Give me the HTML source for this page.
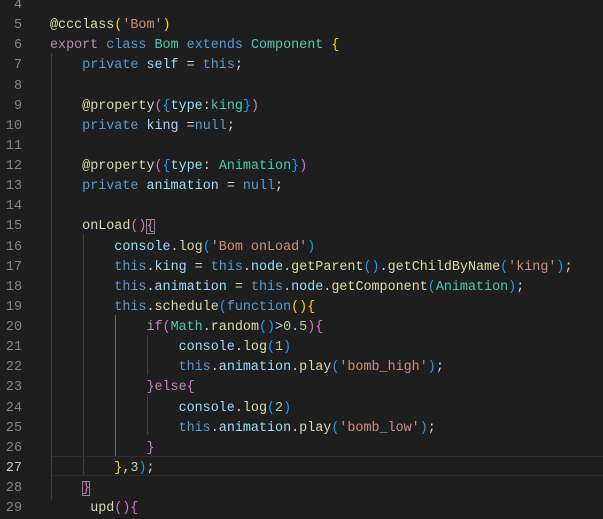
<!DOCTYPE html>
<html><head><meta charset="utf-8"><style>
html,body{margin:0;padding:0;background:#1e1e1e;width:603px;height:500px;overflow:hidden}
.ed{position:absolute;left:0;top:-4px;width:603px;font-family:"Liberation Mono",monospace;font-size:13.4px;line-height:20.14px;color:#d4d4d4}
.l{position:relative;height:20.14px;white-space:pre}
.n{position:absolute;left:0;width:22px;text-align:right;color:#858585}
.c{position:absolute;left:50px}
.k{color:#569cd6}.p{color:#c586c0}.t{color:#4ec9b0}.f{color:#dcdcaa}.s{color:#ce9178}.v{color:#9cdcfe}.num{color:#b5cea8}
.g{color:#ffd700}.o{color:#da70d6}.b{color:#179fff}
.box{outline:1px solid #888;outline-offset:-1px}
.gd{position:absolute;width:1px;background:#404040}
.cur{position:absolute;left:52px;right:0;height:18px;border-top:1px solid #2d2d2d;border-bottom:1px solid #2d2d2d}
</style></head><body>
<div class="gd" style="left:51px;top:53px;height:447px"></div>
<div class="gd" style="left:83px;top:234px;height:242px"></div>
<div class="gd" style="left:115px;top:315px;height:141px;background:#6a6a6a"></div>
<div class="gd" style="left:147px;top:335px;height:40px"></div>
<div class="gd" style="left:147px;top:395px;height:40px"></div>
<div class="cur" style="top:456px"></div>
<div class="ed">
<div class="l"><span class="n">4</span></div>
<div class="l"><span class="n">5</span><span class="c"><span class="f">@ccclass</span><span class="g">(</span><span class="s">'Bom'</span><span class="g">)</span></span></div>
<div class="l"><span class="n">6</span><span class="c"><span class="p">export</span> <span class="k">class</span> <span class="t">Bom</span> <span class="k">extends</span> <span class="t">Component</span> <span class="g">{</span></span></div>
<div class="l"><span class="n">7</span><span class="c">    <span class="k">private</span> <span class="v">self</span> = <span class="k">this</span>;</span></div>
<div class="l"><span class="n">8</span></div>
<div class="l"><span class="n">9</span><span class="c">    <span class="f">@property</span><span class="o">(</span><span class="b">{</span><span class="v">type</span>:<span class="t">king</span><span class="b">}</span><span class="o">)</span></span></div>
<div class="l"><span class="n">10</span><span class="c">    <span class="k">private</span> <span class="v">king</span> =<span class="k">null</span>;</span></div>
<div class="l"><span class="n">11</span></div>
<div class="l"><span class="n">12</span><span class="c">    <span class="f">@property</span><span class="o">(</span><span class="b">{</span><span class="v">type</span>: <span class="t">Animation</span><span class="b">}</span><span class="o">)</span></span></div>
<div class="l"><span class="n">13</span><span class="c">    <span class="k">private</span> <span class="v">animation</span> = <span class="k">null</span>;</span></div>
<div class="l"><span class="n">14</span></div>
<div class="l"><span class="n">15</span><span class="c">    <span class="f">onLoad</span><span class="o">()</span><span class="o box">{</span></span></div>
<div class="l"><span class="n">16</span><span class="c">        <span class="v">console</span>.<span class="f">log</span><span class="b">(</span><span class="s">'Bom onLoad'</span><span class="b">)</span></span></div>
<div class="l"><span class="n">17</span><span class="c">        <span class="k">this</span>.<span class="v">king</span> = <span class="k">this</span>.<span class="v">node</span>.<span class="f">getParent</span><span class="b">()</span>.<span class="f">getChildByName</span><span class="b">(</span><span class="s">'king'</span><span class="b">)</span>;</span></div>
<div class="l"><span class="n">18</span><span class="c">        <span class="k">this</span>.<span class="v">animation</span> = <span class="k">this</span>.<span class="v">node</span>.<span class="f">getComponent</span><span class="b">(</span><span class="t">Animation</span><span class="b">)</span>;</span></div>
<div class="l"><span class="n">19</span><span class="c">        <span class="k">this</span>.<span class="f">schedule</span><span class="b">(</span><span class="k">function</span><span class="g">(){</span></span></div>
<div class="l"><span class="n">20</span><span class="c">            <span class="p">if</span><span class="o">(</span><span class="t">Math</span>.<span class="f">random</span><span class="b">()</span>&gt;<span class="num">0.5</span><span class="o">){</span></span></div>
<div class="l"><span class="n">21</span><span class="c">                <span class="v">console</span>.<span class="f">log</span><span class="b">(</span><span class="num">1</span><span class="b">)</span></span></div>
<div class="l"><span class="n">22</span><span class="c">                <span class="k">this</span>.<span class="v">animation</span>.<span class="f">play</span><span class="b">(</span><span class="s">'bomb_high'</span><span class="b">)</span>;</span></div>
<div class="l"><span class="n">23</span><span class="c">            <span class="o">}</span><span class="p">else</span><span class="o">{</span></span></div>
<div class="l"><span class="n">24</span><span class="c">                <span class="v">console</span>.<span class="f">log</span><span class="b">(</span><span class="num">2</span><span class="b">)</span></span></div>
<div class="l"><span class="n">25</span><span class="c">                <span class="k">this</span>.<span class="v">animation</span>.<span class="f">play</span><span class="b">(</span><span class="s">'bomb_low'</span><span class="b">)</span>;</span></div>
<div class="l"><span class="n">26</span><span class="c">            <span class="o">}</span></span></div>
<div class="l"><span class="n" style="color:#c6c6c6">27</span><span class="c">        <span class="g">}</span>,<span class="num">3</span><span class="b">)</span>;</span></div>
<div class="l"><span class="n">28</span><span class="c">    <span class="o box">}</span></span></div>
<div class="l"><span class="n">29</span><span class="c">     <span class="f">upd</span><span class="o">(){</span></span></div>
</div>
</body></html>
